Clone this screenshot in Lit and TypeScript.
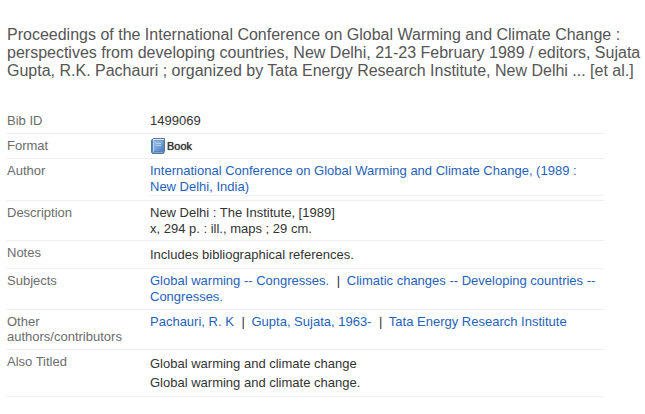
import { LitElement, html, css, svg } from "lit";
import { customElement } from "lit/decorators.js";

const bookIcon = svg`
  <svg class="icon" width="14" height="16" viewBox="0 0 14 16" aria-hidden="true">
    <defs>
      <linearGradient id="cover" x1="0" y1="0" x2="1" y2="1">
        <stop offset="0" stop-color="#9cc0e4" />
        <stop offset="0.5" stop-color="#78a5d6" />
        <stop offset="1" stop-color="#4a7cb6" />
      </linearGradient>
    </defs>
    <path d="M2.5 0.5H13.5V13.5L12.5 15.5H1.5L0.5 14.5V2Z" fill="#5586bd" stroke="#56789c" />
    <path d="M2 1H13V2H2Z" fill="#e3edf6" />
    <path d="M3 2.5H12.5V13H3Z" fill="url(#cover)" />
    <path d="M2.5 2V14" stroke="#b7d1ea" />
    <path d="M2 14.5H12" stroke="#7fa6d0" />
    <path d="M5 5.5H10M5 7.5H10" stroke="#b4d0ec" />
  </svg>`;

@customElement("app-root")
export class AppRoot extends LitElement {
  static styles = css`
    :host {
      display: block;
      padding: 26px 0 16px 7px;
      background: #fff;
      color: #333;
      font: 13px/16px "Liberation Sans", Arial, sans-serif;
    }
    .title {
      margin: 0 0 29px;
      color: #555;
      font-size: 16px;
      font-weight: 400;
      line-height: 18px;
    }
    .record {
      width: calc(100% - 41px);
      border-collapse: separate;
      border-spacing: 0;
      table-layout: fixed;
    }
    .label,
    .value {
      padding: 4px 0;
      border-bottom: 1px solid #eee;
      text-align: left;
      vertical-align: top;
      font-weight: 400;
    }
    .label {
      width: 143px;
      padding-bottom: 5px;
      color: #6c6c6c;
      line-height: 15px;
    }
    .snug {
      padding-bottom: 3px;
    }
    .ruled {
      border-bottom: 1px solid #eee;
    }
    .list {
      margin: 0;
      padding: 0;
      list-style: none;
      line-height: 19px;
    }
    a {
      color: #1f62ba;
      text-decoration: none;
    }
    a:hover {
      text-decoration: underline;
    }
    .bar {
      margin: 0 3px 0 4px;
    }
    .format {
      display: flex;
      align-items: center;
      gap: 2px;
      padding-left: 1px;
      font-size: 11px;
      text-shadow: 0 0 1px #333;
    }
    .icon {
      flex: none;
    }
  `;

  render() {
    return html`
      <h1 class="title">
        Proceedings of the International Conference on Global Warming and
        Climate Change : perspectives from developing countries, New Delhi,
        21-23 February 1989 / editors, Sujata Gupta, R.K. Pachauri ; organized
        by Tata Energy Research Institute, New Delhi ... [et al.]
      </h1>
      <table class="record">
        <tbody>
          <tr>
            <th class="label" scope="row">Bib ID</th>
            <td class="value">1499069</td>
          </tr>
          <tr>
            <th class="label" scope="row">Format</th>
            <td class="value"><div class="format">${bookIcon}<span>Book</span></div></td>
          </tr>
          <tr>
            <th class="label" scope="row">Author</th>
            <td class="value">
              <div class="ruled">
                <a href="#author">International Conference on Global Warming and Climate Change, (1989 : New Delhi, India)</a>
              </div>
            </td>
          </tr>
          <tr>
            <th class="label" scope="row">Description</th>
            <td class="value snug">
              <div>New Delhi : The Institute, [1989]</div>
              <div>x, 294 p. : ill., maps ; 29 cm.</div>
            </td>
          </tr>
          <tr>
            <th class="label" scope="row">Notes</th>
            <td class="value">
              <ul class="list"><li>Includes bibliographical references.</li></ul>
            </td>
          </tr>
          <tr>
            <th class="label" scope="row">Subjects</th>
            <td class="value">
              <a href="#global-warming">Global warming -- Congresses.</a>
              <span class="bar">|</span>
              <a href="#climatic-changes">Climatic changes -- Developing countries -- Congresses.</a>
            </td>
          </tr>
          <tr>
            <th class="label" scope="row">Other authors/contributors</th>
            <td class="value">
              <a href="#pachauri">Pachauri, R. K</a>
              <span class="bar">|</span>
              <a href="#gupta">Gupta, Sujata, 1963-</a>
              <span class="bar">|</span>
              <a href="#teri">Tata Energy Research Institute</a>
            </td>
          </tr>
          <tr>
            <th class="label" scope="row">Also Titled</th>
            <td class="value">
              <ul class="list">
                <li>Global warming and climate change</li>
                <li>Global warming and climate change.</li>
              </ul>
            </td>
          </tr>
        </tbody>
      </table>
    `;
  }
}
